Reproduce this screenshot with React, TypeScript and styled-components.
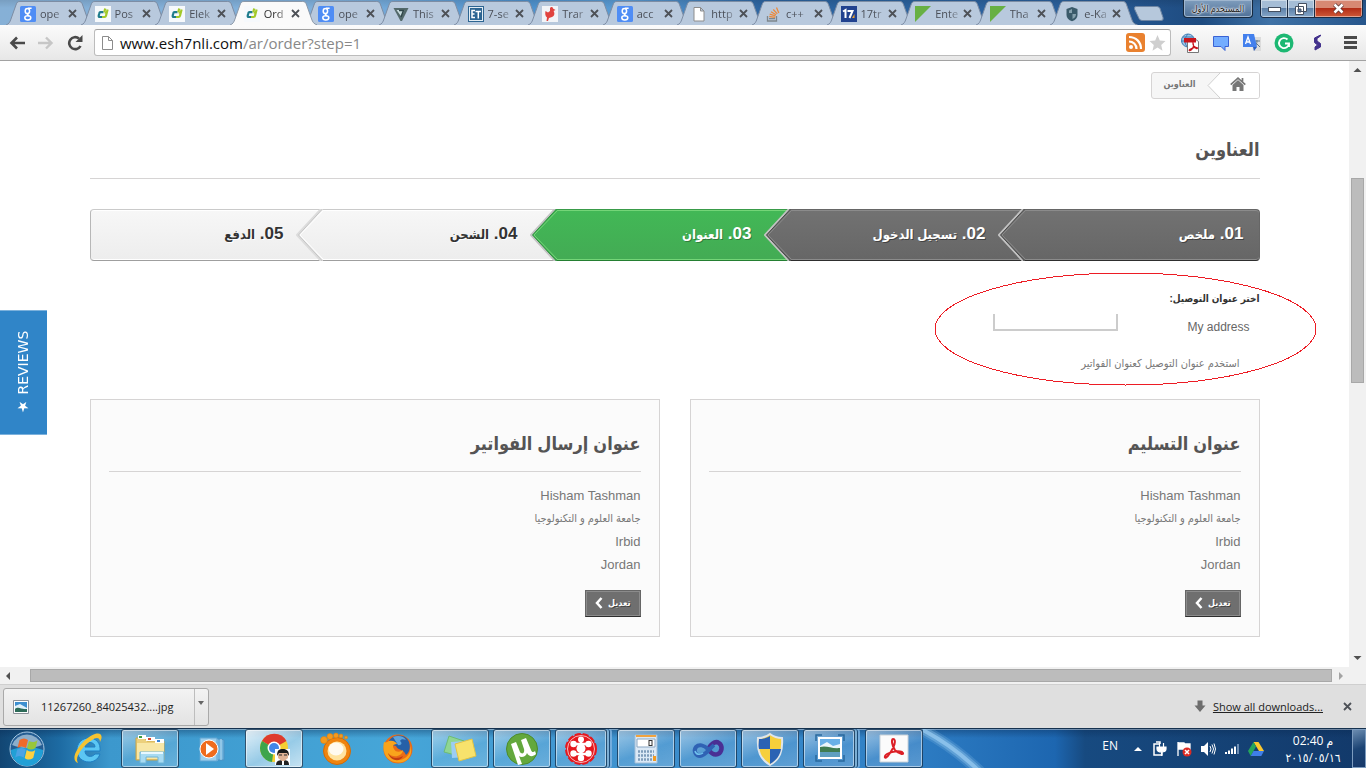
import React from "react";
import styled, { createGlobalStyle, css } from "styled-components";

const ui = `"Open Sans", "DejaVu Sans Condensed", "DejaVu Sans", sans-serif`;
const web = `"Liberation Sans", "DejaVu Sans Condensed", "DejaVu Sans", sans-serif`;

const GlobalStyle = createGlobalStyle`
  *, *::before, *::after { box-sizing: border-box; }
  body { margin: 0; background: #fff; font-family: ${web}; }
  button, select, input { font: inherit; margin: 0; padding: 0; }
  button { border: 0; background: none; color: inherit; }
  h1, h2, p, ol, ul, address { margin: 0; padding: 0; list-style: none; font-style: normal; }
  svg { display: block; flex: none; }
`;

const Window = styled.div`
  display: flex;
  flex-direction: column;
  min-height: 100vh;
`;

/* ---------- tab strip ---------- */

const TabStrip = styled.header`
  display: flex;
  height: 25px;
  padding: 0 3px 0 12px;
  overflow: hidden;
  background:
    linear-gradient(to bottom, rgba(0, 0, 0, 0.1), transparent 8px),
    linear-gradient(to right, #86b0d6 0, #7fb0dc 25%, #4c90cc 38%, #5b9cd4 46%, #2c64a0 56%, #2b609c 78%, #1e4b80 88%, #3f72a6 93%, #27568c 100%);
`;

const TabList = styled.div`
  display: flex;
  flex: 0 1 1119px;
  min-width: 0;
`;

const TabItem = styled.div<{ $active?: boolean }>`
  position: relative;
  z-index: ${(p) => (p.$active ? 2 : 0)};
  display: flex;
  flex: 1 1 0;
  min-width: 0;
  align-items: center;
  gap: 4px;
  height: 26px;
  padding: 1px 10px 0 8px;
  color: ${(p) => (p.$active ? "#333" : "#4a4f58")};
`;

const TabShape = styled.svg`
  position: absolute;
  z-index: -1;
  top: 1px;
  left: -6px;
  width: calc(100% + 13px);
  height: 24px;
`;

const TabTitle = styled.span`
  flex: 1;
  min-width: 0;
  overflow: hidden;
  white-space: nowrap;
  font: 11px/16px ${ui};
  mask-image: linear-gradient(to right, #000 55%, rgba(0, 0, 0, 0.25));
`;

const IconButton = styled.button`
  display: grid;
  place-items: center;
  flex: none;
`;

const NewTab = styled.button`
  align-self: flex-start;
  width: 30px;
  height: 15px;
  margin: 6px 0 0 3px;
`;

const UserButton = styled.button`
  width: 70px;
  height: 18px;
  margin-left: auto;
  border: 1px solid #16293f;
  border-top: 0;
  border-radius: 0 0 4px 4px;
  box-shadow: inset 0 0 0 1px #9fb6cf;
  background: linear-gradient(#7f9dbd, #4e7097);
  color: #222;
  font: 9px/16px ${ui};
  white-space: nowrap;
  text-shadow: 0 0 2px #fff, 0 0 2px #fff, 0 0 3px #fff;
`;

const WindowControls = styled.div`
  display: flex;
  height: 18px;
  margin-left: 7px;
  overflow: hidden;
  border: 1px solid #1b2c44;
  border-top: 0;
  border-radius: 0 0 4px 4px;
`;

const ControlButton = styled(IconButton)<{ $close?: boolean }>`
  width: ${(p) => (p.$close ? 47 : 27)}px;
  border-right: ${(p) => (p.$close ? 0 : 1)}px solid #1b2c44;
  box-shadow: inset 0 0 0 1px rgba(255, 255, 255, 0.45);
  background: ${(p) =>
    p.$close ? "linear-gradient(#d78873 0 45%, #b32d17 50%, #cf5a38)" : "linear-gradient(#a5bdd6 0 45%, #5d80a8 50%, #86a7c9)"};
`;

/* ---------- toolbar ---------- */

const Toolbar = styled.div`
  display: flex;
  align-items: center;
  height: 36px;
  padding: 0 8px;
  border-bottom: 1px solid #a2a2a2;
  background: linear-gradient(#fbfbfb, #e7e7e7);
`;

const NavButtons = styled.div`
  display: flex;
  gap: 11px;
  margin-right: 10px;
`;

const Omnibox = styled.label`
  display: flex;
  flex: 1;
  align-items: center;
  height: 27px;
  padding: 0 4px 0 6px;
  border: 1px solid #bcbcbc;
  border-top-color: #a0a0a0;
  border-radius: 3px;
  background: #fff;
`;

const UrlField = styled.span`
  position: relative;
  display: grid;
  flex: 1;
  margin-left: 6px;
  font: 15px/22px ${ui};
`;

const UrlInput = styled.input`
  grid-area: 1 / 1;
  width: 100%;
  border: 0;
  outline: 0;
  background: transparent;
  color: transparent;
`;

const UrlText = styled.span`
  grid-area: 1 / 1;
  color: #888;
  pointer-events: none;
  b { color: #111; font-weight: 400; }
`;

const Extensions = styled.div`
  display: flex;
  align-items: center;
  gap: 12px;
  margin-left: 9px;
`;

/* ---------- viewport and scroll bars ---------- */

const Viewport = styled.div`
  display: grid;
  flex: 1;
  grid-template: 1fr 17px / 1fr 17px;
  background: #f1f1f1;
`;

const ScrollBar = styled.div<{ $horizontal?: boolean }>`
  display: flex;
  flex-direction: ${(p) => (p.$horizontal ? "row" : "column")};
  align-items: center;
  padding: ${(p) => (p.$horizontal ? "0 1px" : "1px 0")};
`;

const ScrollTrack = styled.div<{ $horizontal?: boolean }>`
  display: flex;
  flex: 1;
  align-self: stretch;
  ${(p) =>
    p.$horizontal
      ? css`padding: 2px 1px 2px 14px;`
      : css`flex-direction: column; padding: 0 2px; &::before { content: ""; flex: 101; } &::after { content: ""; flex: 269; }`}
`;

const ScrollThumb = styled.div<{ $grow: number }>`
  flex: ${(p) => p.$grow};
  border: 1px solid #a8a8a8;
  background: #bcbcbc;
`;

/* ---------- page ---------- */

const Page = styled.main`
  position: relative;
  background: #fff;
`;

const Content = styled.div`
  max-width: 1170px;
  margin: 0 auto;
  padding: 11px 0 30px;
`;

const Breadcrumb = styled.nav`
  display: flex;
  width: max-content;
  height: 27px;
  overflow: hidden;
  border: 1px solid #d6d4d4;
  border-radius: 3px;
  background: #f6f6f6;
`;

const HomeLink = styled.a`
  display: flex;
  align-items: center;
`;

const Crumb = styled.span`
  padding: 0 11px;
  color: #777;
  font: bold 9px/23px ${web};
`;

const PageTitle = styled.h1`
  margin-top: 39px;
  padding-bottom: 15px;
  border-bottom: 1px solid #d6d4d4;
  color: #555454;
  font: bold 18px/25px ${web};
`;

const Steps = styled.ol`
  display: flex;
  margin: 30px 0;
  height: 52px;
`;

type Tone = "done" | "current" | "todo";
const tones = {
  done: { top: "#727272", bottom: "#666666", line: "#666", base: "#2e2e2e", glow: "#8b8b8b", text: "#fff", shadow: "1px 1px rgba(0,0,0,.4)" },
  current: { top: "#42b856", bottom: "#43ab54", line: "#399b49", base: "#247f32", glow: "#74d578", text: "#fff", shadow: "1px 1px rgba(0,0,0,.3)" },
  todo: { top: "#f7f7f7", bottom: "#ededed", line: "#cacaca", base: "#9f9f9f", glow: "#fff", text: "#333", shadow: "1px 1px #fff" },
};

const StepItem = styled.li<{ $tone: Tone; $layer: number }>`
  position: relative;
  z-index: ${(p) => p.$layer};
  width: 20%;
  padding: 0 40px 2px 0;
  border: solid ${(p) => tones[p.$tone].line};
  border-width: 1px 0;
  border-bottom-color: ${(p) => tones[p.$tone].base};
  box-shadow: inset 0 1px ${(p) => tones[p.$tone].glow}, inset 0 -1px ${(p) => tones[p.$tone].glow};
  background: linear-gradient(${(p) => tones[p.$tone].top}, ${(p) => tones[p.$tone].bottom});
  color: ${(p) => tones[p.$tone].text};
  text-shadow: ${(p) => tones[p.$tone].shadow};
  font: bold 17px/48px ${web};
  &:first-child { padding-right: 15px; border-right-width: 1px; border-radius: 0 4px 4px 0; }
  &:last-child { border-left: 1px solid #b7b7b7; border-radius: 4px 0 0 4px; }
`;

const StepWord = styled.span`
  font-size: 13px;
`;

const StepArrow = styled.svg`
  position: absolute;
  top: -1px;
  right: 100%;
  margin-right: -2px;
`;

const AddressChoice = styled.section`
  position: relative;
  height: 108px;
  color: #777;
`;

const FieldLabel = styled.label`
  display: block;
  color: #333;
  font: bold 10px/16px ${web};
`;

const SelectRow = styled.div`
  display: flex;
  align-items: flex-start;
  margin-top: 7px;
  padding-right: 10px;
`;

const SelectedText = styled.span`
  width: 132px;
  color: #666;
  font: 12px/26px ${web};
`;

const AddressSelect = styled.select`
  width: 125px;
  height: 17px;
  border: 2px solid #ccc;
  border-top: 0;
  border-radius: 0;
  outline: 0;
  background: #fff;
  color: transparent;
  appearance: none;
`;

const CheckRow = styled.label`
  display: flex;
  margin-top: 14px;
  font: 11px/18px ${web};
`;

const CheckInput = styled.input`
  width: 20px;
  height: 18px;
  opacity: 0;
`;

const Circle = styled.svg`
  position: absolute;
  top: -19px;
  right: -57px;
  pointer-events: none;
`;

const Cards = styled.div`
  display: grid;
  grid-template-columns: 1fr 1fr;
  gap: 30px;
`;

const Card = styled.section`
  padding: 30px 18px 19px;
  border: 1px solid #d6d4d4;
  background: #fbfbfb;
`;

const CardTitle = styled.h2`
  margin-bottom: 12px;
  padding-bottom: 13px;
  border-bottom: 1px solid #d6d4d4;
  color: #555454;
  font: bold 18px/28px ${web};
`;

const AddressLine = styled.p<{ $arabic?: boolean }>`
  color: #777;
  font: ${(p) => (p.$arabic ? 11 : 13)}px/23px ${web};
`;

const EditButton = styled.button`
  display: flex;
  align-items: center;
  gap: 5px;
  height: 27px;
  margin-top: 14px;
  padding: 0 9px 2px;
  border: 1px solid #666;
  border-bottom-color: #2e2e2e;
  box-shadow: inset 0 0 0 1px #8b8b8b;
  background: #6f6f6f;
  color: #fff;
  font: bold 9px/16px ${web};
  text-shadow: 1px 1px rgba(0, 0, 0, 0.4);
`;

const ReviewsTab = styled.button`
  position: absolute;
  top: 249px;
  left: 0;
  width: 47px;
  height: 125px;
  border: solid #7cb1dc;
  border-width: 1px 0;
  background: #3085c8;
  color: #fff;
  font: 14px/47px "DejaVu Sans", sans-serif;
  writing-mode: vertical-rl;
  transform: rotate(180deg);
`;

/* ---------- downloads ---------- */

const Downloads = styled.footer`
  display: flex;
  align-items: center;
  height: 44px;
  padding: 0 14px 0 3px;
  border-top: 1px solid #cfcfcf;
  background: #dfdfdf;
  color: #222;
  font: 11px/18px ${ui};
`;

const DownloadItem = styled.div`
  display: flex;
  height: 38px;
  border: 1px solid #a9a9a9;
  border-radius: 3px;
  background: linear-gradient(#f3f3f3, #e3e3e3);
`;

const DownloadFile = styled.button`
  display: flex;
  align-items: center;
  gap: 12px;
  padding: 0 20px 0 9px;
`;

const DownloadMenu = styled(IconButton)`
  width: 14px;
  padding-bottom: 8px;
  border-left: 1px solid #bdbdbd;
`;

const AllDownloads = styled.a`
  display: flex;
  align-items: center;
  gap: 7px;
  margin: 0 20px 0 auto;
  color: #222;
  text-decoration: none;
  span { text-decoration: underline; }
`;

/* ---------- task bar ---------- */

const TaskBar = styled.div`
  display: flex;
  height: 40px;
  border-top: 1px solid #16324f;
  box-shadow: inset 0 1px rgba(255, 255, 255, 0.4);
  background:
    linear-gradient(to bottom, rgba(8, 40, 80, 0.4), transparent 9px),
    linear-gradient(to right, #124673 0, #1d6ba3 60px, #3c98cd 110px, #46a6d8 400px, #3f93cf 600px, #2f7fc5 900px, #1d66b0 1055px, #174a80 1085px, #12396a 100%);
`;

const StartButton = styled(IconButton)`
  width: 54px;
`;

const Tasks = styled.nav`
  display: flex;
  gap: 4px;
  margin-left: 5px;
`;

const TaskButton = styled(IconButton)<{ $open?: boolean; $active?: boolean; $stack?: boolean }>`
  width: 58px;
  height: 39px;
  ${(p) =>
    p.$open &&
    css`
      border: 1px solid rgba(10, 40, 70, 0.75);
      border-radius: 3px;
      box-shadow: inset 0 0 0 1px rgba(255, 255, 255, 0.5);
      background: linear-gradient(160deg, rgba(255, 255, 255, 0.5), rgba(255, 255, 255, 0.12) 55%, rgba(255, 255, 255, 0.22));
    `}
  ${(p) => p.$active && css`background: linear-gradient(150deg, rgba(255, 255, 255, 0.85), rgba(255, 255, 255, 0.45) 55%, rgba(255, 255, 255, 0.7));`}
  ${(p) =>
    p.$stack &&
    css`
      width: 52px;
      margin-right: 6px;
      box-shadow: inset 0 0 0 1px rgba(255, 255, 255, 0.5), 2px 0 rgba(150, 200, 235, 0.8), 3px 0 #1c4c78, 5px 0 rgba(130, 180, 225, 0.8);
    `}
`;

const Tray = styled.div`
  display: flex;
  align-items: center;
  gap: 8px;
  margin-left: auto;
  color: #fff;
  font: 12px/17px ${ui};
`;

const Language = styled.button`
  margin-right: 8px;
  padding-bottom: 6px;
`;

const Clock = styled.time`
  width: 78px;
  margin-left: 2px;
  text-align: center;
`;

const ClockLine = styled.span`
  display: block;
  white-space: nowrap;
`;

const ShowDesktop = styled.button`
  align-self: stretch;
  width: 14px;
  margin-left: -8px;
  border: 1px solid #7d9cbf;
  background: linear-gradient(160deg, #6b8cb0, #1c4474 50%, #16386a);
`;

/* ---------- drawings ---------- */

type FavKind = "google" | "elek" | "seven" | "et" | "red" | "doc" | "stack" | "track" | "green" | "shield";

function Favicon({ kind }: { kind: FavKind }) {
  return (
    <svg width="16" height="16" viewBox="0 0 16 16" aria-hidden="true">
      {kind === "google" && (
        <>
          <rect width="16" height="16" rx="1.5" fill="#4f8df5" />
          <g fill="none" stroke="#fff" strokeWidth="1.5">
            <ellipse cx="7.4" cy="5" rx="2.2" ry="2.6" />
            <path d="M8 2.2h3.6M9 7.3c-2.4.8-1.6 1.8 0 2.6" />
            <ellipse cx="7.8" cy="11.8" rx="3" ry="2.1" />
          </g>
        </>
      )}
      {kind === "elek" && (
        <>
          <rect width="16" height="16" fill="#f6f9fc" />
          <path d="M8.500 6.200H5.500Q4.500 6.200 4.300 7.200L3.700 9.800Q3.500 11 4.700 11H8" fill="none" stroke="#1f7c8c" strokeWidth="2.200" />
          <path d="M10.200 2.500 9.300 6.200M9.500 6.500h3M12.600 3.500 11 9.800Q10.700 11 9.500 11H7" fill="none" stroke="#a3c92a" strokeWidth="2.200" />
        </>
      )}
      {kind === "seven" && (
        <>
          <path d="M.5 2h15L9 15H7.5z" fill="#53696b" />
          <path d="M3.500 4h8L8.200 10.500z" fill="#c8dcdf" />
          <path d="M6 4.500h4.500L8 11" stroke="#30474a" strokeWidth="1.500" fill="none" />
        </>
      )}
      {kind === "et" && (
        <>
          <rect width="16" height="16" fill="#2d6592" />
          <rect x="1.5" y="1.5" width="13" height="13" fill="none" stroke="#e4edf4" />
          <path d="M7 4.500H4v7h3M4 8h2.500M7.500 5.500H13M10.300 5.500v7" stroke="#fff" strokeWidth="1.500" fill="none" />
        </>
      )}
      {kind === "red" && (
        <>
          <rect width="16" height="16" fill="#f1f4f8" />
          <path d="M8 2c1-1.500 3-1 3 .5L13.500 4 11.500 5c1.500 2 1 5-1.500 6l-3 1-1 3H4.500l.5-3.500C3 10 3 7 3.500 5L6 6.500 8 5z" fill="#e0433f" />
        </>
      )}
      {kind === "doc" && <path d="M3 1.500h6.500L13 5v10H3zM9.500 1.500V5H13" fill="#fff" stroke="#8d8d8d" />}
      {kind === "stack" && (
        <g fill="none" strokeWidth="1.3">
          <path d="M1.500 10v5h9v-5M3 12.700h6" stroke="#7d868c" />
          <path d="m3.200 10.500 6 .8M3.700 8.200l5.800 1.700M5 5.800l5.100 3M7.300 3.500l4 4.400M10.500 1.500l2.300 5.400" stroke="#ec8a3c" />
        </g>
      )}
      {kind === "track" && (
        <>
          <rect width="16" height="16" fill="#21428f" />
          <path d="M2 5.500 4.500 4v8M6.500 5h5L8.500 12" stroke="#fff" strokeWidth="2" fill="none" />
          <path d="m11 12 2.500-4v4z" fill="#f0a32c" />
        </>
      )}
      {kind === "green" && <path d="M0 0h16L0 16z" fill="#67b043" />}
      {kind === "shield" && (
        <>
          <path d="M2.500 3 8 1l5.500 2v6c0 3-2 5-5.500 6.300C4.500 14 2.500 12 2.500 9z" fill="#3a5a6a" />
          <path d="M5 4.500 8 3v4H5zM8.500 8h3.500c0 2-1 4-3.500 5z" fill="#86a1ae" />
        </>
      )}
    </svg>
  );
}

const CloseMark = () => (
  <svg width="9" height="9" viewBox="0 0 9 9" aria-hidden="true">
    <path d="m1 1 7 7M8 1 1 8" stroke="#4d5157" strokeWidth="1.8" />
  </svg>
);

const tabs: [FavKind, string][] = [
  ["google", "ope"], ["elek", "Pos"], ["elek", "Elek"], ["elek", "Ord"], ["google", "ope"],
  ["seven", "This"], ["et", "7-se"], ["red", "Trar"], ["google", "acc"], ["doc", "http"],
  ["stack", "c++"], ["track", "17tr"], ["green", "Ente"], ["green", "Tha"], ["shield", "e-Ka"],
];

function BrowserTab({ kind, title, active }: { kind: FavKind; title: string; active: boolean }) {
  return (
    <TabItem $active={active}>
      <TabShape viewBox="0 0 88 24" preserveAspectRatio="none" aria-hidden="true">
        <path
          d="M0 24C3 23 4 21 5 18L10 4C11 1 12 .5 14 .5H73C75 .5 76 1 77 4L82 18C83 21 84 23 88 24"
          fill={active ? "#fafafa" : "#b8c9dd"}
          stroke={active ? "#8b98a8" : "#7c8da4"}
        />
      </TabShape>
      <Favicon kind={kind} />
      <TabTitle>{title}</TabTitle>
      <IconButton aria-label={`Close ${title}`}><CloseMark /></IconButton>
    </TabItem>
  );
}

const taskIcons: Record<string, React.ReactNode> = {
  ie: (
    <>
      <path d="M29 19H14c0 6 7 7 10 3h5c-2 6-7 8-11 8C11 30 6 25 6 18S11 6 18 6s12 5 11 13zm-5-4c0-6-10-6-10 0z" fill="#5bc6f3" stroke="#1f7fc4" />
      <path d="M7 31C-3 28 10 7 24 2c7-2 8 3 5 8 0-5-4-5-8-2C12 14 3 25 7 31z" fill="#f5c331" />
    </>
  ),
  folder: (
    <>
      <path d="M3 6h9l2 3h17v19H3z" fill="#ecd07c" stroke="#c9a548" />
      <path d="M5 3h8v4H5zM13 5h9v4h-9zM22 7h9v4h-9z" fill="#fff" />
      <path d="M6 4h3v2H6z" fill="#3b9c3f" /><path d="M15 6h3v2h-3z" fill="#d4432f" /><path d="M24 8h3v2h-3z" fill="#3b84d4" />
      <path d="M4 11h27v16H4z" fill="#f8e7a6" />
      <path d="M7 31V20h24v11h-6v-6H13v6z" fill="#a8dbf2" stroke="#6fb4d8" />
      <path d="M8 21h22" stroke="#e8f8ff" strokeWidth="2" />
    </>
  ),
  media: (
    <>
      <path d="M12 7h14l3 1v20H12z" fill="#6fb2dc" stroke="#4c92c3" />
      <path d="M22 7v22M26 7v21" stroke="#b5dcf2" />
      <path d="M5 6h17v23H5z" fill="#9ed0ee" stroke="#5fa4d2" />
      <circle cx="14" cy="17" r="9" fill="#ef6c1e" stroke="#fff" />
      <path d="m11 11 8 6-8 6z" fill="#fff" />
    </>
  ),
  chrome: (
    <>
      <circle cx="17" cy="16" r="14" fill="#f5cf32" />
      <path d="M17 16 5 9a14 14 0 0 1 24.500 0z" fill="#de3b2d" />
      <path d="M17 16 5 9a14 14 0 0 0 10 21z" fill="#3ea54c" />
      <circle cx="17" cy="16" r="6.5" fill="#fff" /><circle cx="17" cy="16" r="5" fill="#4286e8" />
      <path d="M18 17h15v16H18z" fill="#fff" />
      <path d="M19 33c0-4 3-5 7-5s6 1 6 5z" fill="#222" /><path d="M21 19h10v7l-5 4-5-4z" fill="#e0b294" />
      <path d="M20 24c0-6 2-7 6-7s6 2 6 7l-2-3h-8z" fill="#1a1a1a" /><path d="M25 29h2v4h-2z" fill="#fff" />
      <path d="M22 23h3M27 23h3" stroke="#222" />
    </>
  ),
  gom: (
    <>
      <circle cx="18" cy="19" r="13.5" fill="#ef8410" stroke="#d36a05" />
      <circle cx="18" cy="19" r="9.5" fill="#ffe3a0" /><ellipse cx="17" cy="17" rx="7.5" ry="6.5" fill="#fffaf0" />
      <g fill="#f59a1c" stroke="#d9790a" strokeWidth=".5"><circle cx="5" cy="8" r="3.5" /><circle cx="11" cy="4.5" r="3" /><circle cx="17" cy="3.500" r="2.500" /><circle cx="22" cy="4" r="2" /><circle cx="27" cy="5.500" r="1.600" /></g>
    </>
  ),
  firefox: (
    <>
      <circle cx="17" cy="17" r="14.5" fill="#e86b17" />
      <path d="M8 9C11 2 25 1 28 10c2 6 0 11-3 13-3-7-8-4-10-9-2-1-6 0-7-5z" fill="#2660a8" />
      <path d="M12 5c5-2 11-1 13 3-3-1-5-1-6 1 3 2 1 5-2 4z" fill="#5ca4dd" />
      <path d="M3 10c2 1 3 0 5-1 4-1 7 1 8 3-4 0-5 2-3 5 2 4 7 3 9 1 0 6-10 9-15 3 2 6 11 9 17 5 5-3 6-9 5-13 3 7 0 15-7 17C9 33 0 23 3 10z" fill="#f9a41c" />
      <path d="M7 21c3 6 10 6 15 3-2 6-12 6-15-3z" fill="#c33c12" />
    </>
  ),
  notes: (
    <>
      <path d="m6 4 15 5-5 15L1 20z" fill="#8fd693" stroke="#6dbb76" /><path d="m8 10 14-1 2 16-15 1z" fill="#9ccdf3" />
      <path d="m12 12 17-5 4 17-17 5z" fill="#f8e26c" stroke="#e1c445" />
    </>
  ),
  torrent: (
    <>
      <circle cx="17" cy="17" r="15.5" fill="#63a83d" stroke="#4c8b2c" />
      <path d="M6 12l5-2 4 10c2 3 5 1 4-3l-3-9 5-2 5 12c1 3 3 2 4 1l1 3c-3 3-7 3-9-1-1 4-6 5-8 3l3 8-4 1z" fill="#fff" />
    </>
  ),
  dots: (
    <>
      <circle cx="17" cy="17" r="15" fill="#e5181e" stroke="#e5181e" strokeWidth="2" strokeDasharray="6 2" />
      <circle cx="17" cy="17" r="13.5" fill="none" stroke="#fff" strokeWidth=".7" />
      <path d="M17 8v6M10 12h6M18 12h6M10 22h6M18 22h6M17 20v6M13 17h8" stroke="#fff" strokeWidth="2.5" />
      <g fill="#fff"><circle cx="17" cy="7.500" r="3" /><circle cx="9.500" cy="12" r="3.200" /><circle cx="24.500" cy="12" r="3.200" /><circle cx="17" cy="16.500" r="4.500" /><circle cx="9.500" cy="21.500" r="3.200" /><circle cx="24.500" cy="21.500" r="3.200" /><circle cx="17" cy="26" r="3.200" /></g>
    </>
  ),
  calc: (
    <>
      <path d="M6 3h22v28H6z" fill="#dbe9f6" stroke="#a4bfd8" /><path d="M7 3h20v2H7z" fill="#f0a340" />
      <path d="M8 7h18v8H8z" fill="#fff" stroke="#89a6c2" /><rect x="20" y="8.500" width="3" height="5" fill="none" stroke="#333" />
      <path d="M9 19.500h16M9 23.500h16M9 27.500h16" stroke="#7e9cba" strokeWidth="2.5" strokeDasharray="2 1" />
      <path d="M24 24h3v5h-3z" fill="#f29a22" />
    </>
  ),
  loop: (
    <>
      <path d="M17 17c4-6 8-8 11-6 4 3 3 9-1 11-4 2-8-2-10-5" fill="none" stroke="#4a2f94" strokeWidth="4.5" />
      <path d="M17 17c-4-4-9-5-12-2-3 4 0 9 4 9 5 0 9-7 14-11" fill="none" stroke="#2f62b4" strokeWidth="4" />
      <path d="M4 19c1 4 5 4 8 2" fill="none" stroke="#71c3ee" strokeWidth="1.5" />
    </>
  ),
  shield: (
    <>
      <path d="M17 2c4 3 8 4 12 4 1 13-2 21-12 27C7 27 4 19 5 6c4 0 8-1 12-4z" fill="#f6cf3b" stroke="#dfe5eb" strokeWidth="2" />
      <path d="M17 4v13H6c-1-4 0-7 0-10 4 0 8-1 11-3zM17 17h11c-1 6-4 11-11 15z" fill="#2a62b4" />
    </>
  ),
  photo: (
    <>
      <path d="M6 5h24v22H6z" fill="#fff" /><path d="M8 7h20v11H8z" fill="#69b0e8" />
      <path d="m8 14 7-4 6 4 7-2v6H8z" fill="#eaf5fb" /><path d="M8 15c7-2 11 2 20 1v6H8z" fill="#3f7c52" /><path d="M8 20h20v5H8z" fill="#5f9fc0" />
      <path d="M4 9V3h6M26 3h6v6M32 23v6h-6M10 29H4v-6" fill="none" stroke="#2a6a9e" strokeWidth="1.5" />
    </>
  ),
  acrobat: (
    <>
      <path d="M3 3h28v27H3z" fill="#fbfbfb" stroke="#c9d1d8" />
      <path d="M16 7c4 0 1 9-3 14-3 5-6 6-5 3s12-6 17-4c4 3-3 3-7-2-3-4-4-11-2-11z" fill="none" stroke="#dc1f26" strokeWidth="2" />
    </>
  ),
};

const tasks: { icon: string; label: string; open?: boolean; active?: boolean; stack?: boolean }[] = [
  { icon: "ie", label: "Internet Explorer" },
  { icon: "folder", label: "Windows Explorer", open: true },
  { icon: "media", label: "Media Player" },
  { icon: "chrome", label: "Google Chrome", open: true, active: true },
  { icon: "gom", label: "GOM Player" },
  { icon: "firefox", label: "Firefox" },
  { icon: "notes", label: "Sticky Notes", open: true },
  { icon: "torrent", label: "Torrent", open: true },
  { icon: "dots", label: "Circuit designer", open: true, stack: true },
  { icon: "calc", label: "Calculator", open: true },
  { icon: "loop", label: "Visual Studio", open: true },
  { icon: "shield", label: "Security", open: true },
  { icon: "photo", label: "Photo Viewer", open: true, stack: true },
  { icon: "acrobat", label: "Acrobat Reader", open: true },
];

const steps: { no: string; word: string; tone: Tone }[] = [
  { no: "01.", word: "ملخص", tone: "done" },
  { no: "02.", word: "تسجيل الدخول", tone: "done" },
  { no: "03.", word: "العنوان", tone: "current" },
  { no: "04.", word: "الشحن", tone: "todo" },
  { no: "05.", word: "الدفع", tone: "todo" },
];

function Arrow({ tone }: { tone: Tone }) {
  const t = tones[tone];
  const id = `arrow-${tone}`;
  const edge = tone === "todo" ? "#c4c4c4" : tone === "current" ? "#2d8f3d" : "#4a4a4a";
  const rim = tone === "todo" ? "#dcdcdc" : "#c2c2c2";
  return (
    <StepArrow width="30" height="52" viewBox="0 0 30 52" aria-hidden="true">
      <defs>
        <linearGradient id={id} x1="0" y1="0" x2="0" y2="1">
          <stop offset="0" stopColor={t.top} />
          <stop offset="1" stopColor={t.bottom} />
        </linearGradient>
      </defs>
      <path d="M26 0 2 26l24 26h4V0z" fill={`url(#${id})`} />
      <path d="M25 0 1 26l24 26" fill="none" stroke={rim} strokeWidth="2" />
      <path d="M26.500 0 2.500 26l24 26" fill="none" stroke={edge} />
      <path d="M28 1 4 26l24 25" fill="none" stroke={t.glow} />
      <path d="M27 .5h3" stroke={t.line} /><path d="M27 51.500h3" stroke={t.base} />
      <path d="M28 1.500h2M28 50.500h2" stroke={t.glow} />
    </StepArrow>
  );
}

function AddressCard({ title }: { title: string }) {
  return (
    <Card>
      <CardTitle>{title}</CardTitle>
      <address>
        <AddressLine>Hisham Tashman</AddressLine>
        <AddressLine $arabic>جامعة العلوم و التكنولوجيا</AddressLine>
        <AddressLine>Irbid</AddressLine>
        <AddressLine>Jordan</AddressLine>
      </address>
      <EditButton>
        تعديل
        <svg width="8" height="12" viewBox="0 0 8 12" aria-hidden="true">
          <path d="M6.500 1 2 6l4.500 5" fill="none" stroke="#fff" strokeWidth="2.5" />
        </svg>
      </EditButton>
    </Card>
  );
}

const Triangle = ({ d, fill = "#505050" }: { d: string; fill?: string }) => (
  <svg width="15" height="15" viewBox="0 0 15 15" aria-hidden="true"><path d={d} fill={fill} /></svg>
);

export default function App() {
  return (
    <Window>
      <GlobalStyle />
      <TabStrip>
        <TabList>
          {tabs.map(([kind, title], i) => <BrowserTab key={i} kind={kind} title={title} active={i === 3} />)}
        </TabList>
        <NewTab aria-label="New tab">
          <svg width="30" height="15" viewBox="0 0 30 15"><path d="M2 .5h21q2 0 3 2l3 9q1 3-2 3H8q-2 0-3-2L.5 3Q0 .5 2 .5z" fill="#b6c8dc" stroke="#6f86a3" /></svg>
        </NewTab>
        <UserButton dir="rtl">المستخدم الأول</UserButton>
        <WindowControls>
          <ControlButton aria-label="Minimize">
            <svg width="13" height="6"><rect x=".5" y="1.5" width="12" height="4" fill="#fff" stroke="#444f60" /></svg>
          </ControlButton>
          <ControlButton aria-label="Restore">
            <svg width="12" height="12" viewBox="0 0 12 12"><path d="M3.500.5h8v8h-8zM.5 3.500h8v8h-8z" fill="#fff" stroke="#444f60" /><path d="M3 6h3v3H3z" fill="#5d80a8" stroke="#444f60" /></svg>
          </ControlButton>
          <ControlButton $close aria-label="Close window">
            <svg width="13" height="11" viewBox="0 0 13 11"><path d="m2.500 1.500 8 8M10.500 1.500l-8 8" stroke="#5b3534" strokeWidth="4" /><path d="m2.500 1.500 8 8M10.500 1.500l-8 8" stroke="#fff" strokeWidth="2.5" /></svg>
          </ControlButton>
        </WindowControls>
      </TabStrip>

      <Toolbar>
        <NavButtons>
          <IconButton aria-label="Back"><svg width="18" height="16" viewBox="0 0 18 16"><path d="M17 8H3M9 2.500 3.500 8 9 13.500" fill="none" stroke="#4a4a4a" strokeWidth="2.6" /></svg></IconButton>
          <IconButton aria-label="Forward"><svg width="18" height="16" viewBox="0 0 18 16"><path d="M1 8h14M9 2.500 14.500 8 9 13.500" fill="none" stroke="#c6c6c6" strokeWidth="2.4" /></svg></IconButton>
          <IconButton aria-label="Reload"><svg width="18" height="16" viewBox="0 0 18 16"><path d="M14.500 11A6 6 0 1 1 13 3.500" fill="none" stroke="#4a4a4a" strokeWidth="2.6" /><path d="M16.500 0v7h-7z" fill="#4a4a4a" /></svg></IconButton>
        </NavButtons>
        <Omnibox>
          <svg width="13" height="16" viewBox="0 0 13 16"><path d="M1.500 1.500h6l4 4v9h-10zM7.500 1.500v4h4" fill="#fff" stroke="#8c8c8c" /></svg>
          <UrlField>
            <UrlInput aria-label="Address" />
            <UrlText><b>www.esh7nli.com</b>/ar/order?step=1</UrlText>
          </UrlField>
          <svg width="19" height="19" viewBox="0 0 19 19"><rect width="19" height="19" rx="3" fill="#e9812f" /><circle cx="5" cy="14" r="2" fill="#fff" /><path d="M3 8.500c4 0 7.500 3 7.500 7.500M3 4c7 0 12 5 12 12" fill="none" stroke="#fff" strokeWidth="2.2" /></svg>
          <svg width="21" height="18" viewBox="0 0 21 18"><path d="m12.500 1 2.300 5.500 5.700.4-4.300 4 1.300 5.800-5-3.200-5 3.200 1.300-5.800-4.300-4 5.700-.4z" fill="#cfcfcf" /></svg>
        </Omnibox>
        <Extensions>
          <svg width="20" height="20" viewBox="0 0 20 20"><circle cx="8" cy="7.500" r="6.500" fill="#9cc3e6" stroke="#3f7db5" /><path d="M1 8h14M8 1c-4 4-4 10 0 14M3 4h10" stroke="#3f7db5" fill="none" /><path d="M7.500 5.500h7l4 3v11h-11z" fill="#fff" stroke="#777" /><path d="M4 5h12v4.500H4z" fill="#c8151c" /><path d="M13 10c2 4-2 8-3.500 7.500S15 13 17.500 15c-1 2-5-3-4.500-5z" stroke="#c8151c" fill="none" strokeWidth="1.4" /></svg>
          <svg width="18" height="18" viewBox="0 0 18 18"><path d="M1.500 2.500h15v10H13v4l-4-4H1.500z" fill="#74adff" stroke="#3a62d4" /></svg>
          <svg width="20" height="20" viewBox="0 0 20 20"><path d="M9 4h10v14H11z" fill="#dcdcdc" /><path d="M12 8h6M15 7c0 4-1 6-3 7M14 10l4 4" stroke="#60788c" fill="none" /><path d="M1 1h11l3 13H1z" fill="#4380ed" /><path d="M11 14h4l-3 4z" fill="#2b5fc0" /><path d="m3.500 11 2.500-7 2.500 7M4.500 9h3" stroke="#fff" strokeWidth="1.3" fill="none" /></svg>
          <svg width="20" height="20" viewBox="0 0 20 20"><circle cx="10" cy="10" r="9.5" fill="#1db873" /><path d="M13.500 6.500A5 5 0 1 0 15 10.500h-4M15 10.500V14" stroke="#fff" strokeWidth="1.9" fill="none" /></svg>
          <svg width="20" height="18" viewBox="0 0 20 18"><path d="M14.500 2 11 4.500v2.500l3.500 2.500v3.500L9 16v-3l2.500-2-3-2.500V4L14.500 1z" fill="#43318c" stroke="#43318c" /></svg>
          <svg width="20" height="16" viewBox="0 0 20 16"><path d="M6 2.500h13M6 7.500h13M6 12.500h13" stroke="#4a4a4a" strokeWidth="3" /></svg>
        </Extensions>
      </Toolbar>

      <Viewport>
        <Page dir="rtl" lang="ar">
          <Content>
            <Breadcrumb>
              <HomeLink href="#home" aria-label="الرئيسية">
                <svg width="52" height="25" viewBox="0 0 52 25">
                  <path d="M13 0 1 12.500 13 25h39V0z" fill="#fff" />
                  <path d="M13 0 1 12.500 13 25" fill="none" stroke="#cfcfcf" />
                  <g transform="translate(23 4)">
                    <path d="M8 3 2.500 8v6h4V10h3v4h4V8z" fill="#777" />
                    <path d="M.7 7.700 8 1.200l7.300 6.500M12.500 1v4" fill="none" stroke="#777" strokeWidth="1.7" />
                  </g>
                </svg>
              </HomeLink>
              <Crumb>العناوين</Crumb>
            </Breadcrumb>
            <PageTitle>العناوين</PageTitle>
            <Steps>
              {steps.map((s, i) => (
                <StepItem key={s.no} $tone={s.tone} $layer={steps.length - i}>
                  {s.no} <StepWord>{s.word}</StepWord>
                  {i < steps.length - 1 && <Arrow tone={s.tone} />}
                </StepItem>
              ))}
            </Steps>
            <AddressChoice>
              <FieldLabel htmlFor="delivery">اختر عنوان التوصيل:</FieldLabel>
              <SelectRow>
                <SelectedText>My address</SelectedText>
                <AddressSelect id="delivery" />
              </SelectRow>
              <CheckRow>
                <CheckInput type="checkbox" defaultChecked />
                استخدم عنوان التوصيل كعنوان الفواتير
              </CheckRow>
              <Circle width="383" height="114" viewBox="0 0 383 114" aria-hidden="true">
                <ellipse cx="191.5" cy="57" rx="190.5" ry="56" fill="none" stroke="#ed1c24" shapeRendering="crispEdges" />
              </Circle>
            </AddressChoice>
            <Cards>
              <AddressCard title="عنوان التسليم" />
              <AddressCard title="عنوان إرسال الفواتير" />
            </Cards>
          </Content>
          <ReviewsTab dir="ltr">★ REVIEWS</ReviewsTab>
        </Page>
        <ScrollBar>
          <Triangle d="M3.500 10h8l-4-4z" />
          <ScrollTrack><ScrollThumb $grow={204} /></ScrollTrack>
          <Triangle d="M3.500 5h8l-4 4z" />
        </ScrollBar>
        <ScrollBar $horizontal>
          <Triangle d="M9 4v8L5 8z" />
          <ScrollTrack $horizontal><ScrollThumb $grow={1} /></ScrollTrack>
          <Triangle d="M6 4v8l4-4z" fill="#a3a3a3" />
        </ScrollBar>
      </Viewport>

      <Downloads>
        <DownloadItem>
          <DownloadFile>
            <svg width="16" height="14" viewBox="0 0 16 14"><path d="M.5.500h15v13H.500z" fill="#fff" stroke="#8b9199" /><path d="M2 2h12v10H2z" fill="#3d8fd0" /><path d="m2 6 5-2 7 4v1H2z" fill="#dff0fa" /><path d="M2 9c4-3 6 1 12 0v3H2z" fill="#2d6b58" /></svg>
            11267260_84025432....jpg
          </DownloadFile>
          <DownloadMenu aria-label="Download options"><svg width="6" height="4"><path d="M0 0h6L3 4z" fill="#666" /></svg></DownloadMenu>
        </DownloadItem>
        <AllDownloads href="#downloads">
          <svg width="12" height="13" viewBox="0 0 12 13"><path d="M3.500.500h5v5h3L6 12 .500 5.500h3z" fill="#6e6e6e" /></svg>
          <span>Show all downloads...</span>
        </AllDownloads>
        <IconButton aria-label="Close downloads"><CloseMark /></IconButton>
      </Downloads>

      <TaskBar>
        <StartButton aria-label="Start">
          <svg width="38" height="38" viewBox="0 0 38 38">
            <circle cx="19" cy="19" r="17" fill="#245d93" stroke="#a9c9e3" />
            <path d="M3 20a16 16 0 0 0 32 0c-10-4-22-4-32 0z" fill="#21a0d6" />
            <path d="M4 15a16 16 0 0 1 30 0c-9 4-21 4-30 0z" fill="#8caecb" />
            <g transform="translate(1.500 0)">
              <path d="M10 10c3-2 6-2 8.500 0l-2 8c-3-2-6-2-8.500 0z" fill="#ee6a2b" /><path d="M19.500 11c3 1.500 6 1.500 8.500-1l-2 8c-3 2-6 2-8.500 0z" fill="#98c73b" />
              <path d="M7.700 19.500c3-2 6-2 8.500 0l-2 8c-3-2-6-2-8.500 0z" fill="#4ba3e4" /><path d="M17.200 20c3 2 6 2 8.500 0l-2 8c-3 2-6 2-8.500 0z" fill="#fbd13f" />
            </g>
          </svg>
        </StartButton>
        <Tasks>
          {tasks.map((t) => (
            <TaskButton key={t.icon} aria-label={t.label} $open={t.open} $active={t.active} $stack={t.stack}>
              <svg width="34" height="34" viewBox="0 0 34 34">{taskIcons[t.icon]}</svg>
            </TaskButton>
          ))}
        </Tasks>
        <svg width="64" height="39" viewBox="0 0 64 39" aria-hidden="true">
          <g fill="none" stroke="#9bcdf2">
            <path d="M-6-2C14 8 36 22 58 44" strokeWidth="12" opacity=".2" />
            <path d="M-6-2C14 8 36 22 58 44" strokeWidth="8" opacity=".35" />
            <path d="M-6-2C14 8 36 22 58 44" strokeWidth="4" opacity=".7" />
          </g>
        </svg>
        <Tray>
          <Language>EN</Language>
          <svg width="8" height="4"><path d="M0 4h8L4 0z" fill="#fff" /></svg>
          <svg width="18" height="16" viewBox="0 0 18 16"><path d="M9 3H4v11h8v-3M6 1h4v2" fill="none" stroke="#fff" strokeWidth="1.5" /><path d="M7 6h9v2q0 3-4.500 3T7 8zM9.500 2v4M13.500 2v4M11.500 11v4" fill="#fff" stroke="#fff" strokeWidth="1.2" /></svg>
          <svg width="16" height="16" viewBox="0 0 16 16"><path d="M2 1v14M3 2h5l1 1h5v6H8L7 8H3z" fill="#fff" stroke="#fff" strokeWidth="1.3" /><circle cx="11" cy="11" r="4.5" fill="#dd2b24" /><path d="m9 9 4 4M13 9l-4 4" stroke="#fff" strokeWidth="1.5" /></svg>
          <svg width="16" height="16" viewBox="0 0 16 16"><path d="M1 5h3l4-4v14l-4-4H1z" fill="#fff" /><path d="M10 5q2 3 0 6M12 3.500q3 4.500 0 9M14 2.500q3 5.500 0 11" stroke="#fff" fill="none" /></svg>
          <svg width="16" height="12" viewBox="0 0 16 12"><path d="M1 9h2v2H1zM4 7.500h2V11H4zM7 5.500h2V11H7zM10 3.500h2V11h-2z" fill="#fff" /><path d="M13 1h2v10h-2z" fill="#6c8db4" /></svg>
          <svg width="16" height="14" viewBox="0 0 16 14"><path d="M5.500 0h5L16 9h-5z" fill="#fbc72d" /><path d="M5.500 0 8 4.500 2.700 14 0 9z" fill="#25a55a" /><path d="M5.500 9H16l-2.700 5H2.700z" fill="#3f7ee8" /></svg>
          <Clock dateTime="2015-05-16T14:40">
            <ClockLine>02:40 م</ClockLine>
            <ClockLine>٢٠١٥/٠٥/١٦</ClockLine>
          </Clock>
          <ShowDesktop aria-label="Show desktop" />
        </Tray>
      </TaskBar>
    </Window>
  );
}
